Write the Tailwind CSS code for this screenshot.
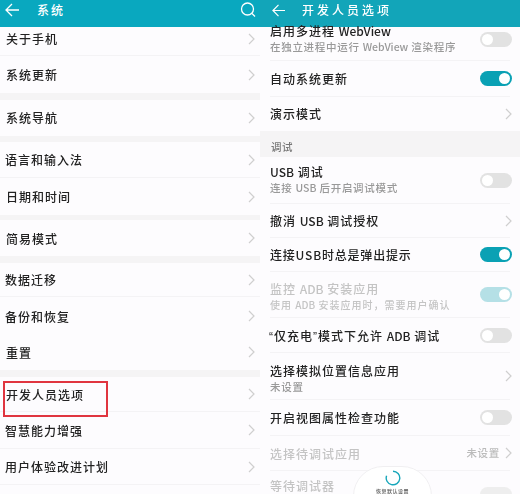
<!DOCTYPE html>
<html lang="zh-CN">
<head>
    <meta charset="UTF-8">
    <meta name="viewport" content="width=device-width, initial-scale=1.0">
    <title>开发人员选项</title>
    <script src="https://cdn.jsdelivr.net/npm/@tailwindcss/browser@4"></script>
</head>
<body class="bg-[#fdfcfe] font-['Noto_Sans_CJK_SC','Noto_Sans',sans-serif] font-medium text-[12px] tracking-[1px] text-[#222] overflow-hidden">
<div class="flex w-[520px] h-[494px] overflow-hidden blur-[0.35px]">

    <!-- 系统 -->
    <div class="w-[260px] h-[494px] shrink-0">
        <div class="h-[27px] bg-[#09a8bf] flex items-center text-white pb-[8px]">
            <svg class="ml-[5px] w-[14px] h-[14px]" viewBox="0 0 14 14" fill="none" stroke="currentColor" stroke-width="1.3"><path d="M14 7H1M7 1 1 7l6 6"/></svg>
            <span class="ml-[18px] tracking-[2px]">系统</span>
            <svg class="ml-auto mr-[4px] w-[16px] h-[16px]" viewBox="0 0 16 16" fill="none" stroke="currentColor" stroke-width="1.3"><circle cx="7.5" cy="7" r="6"/><path d="m12 11.5 3 3"/></svg>
        </div>

        <div class="h-[29px] pl-[6px] pr-[5px] flex items-center justify-between pb-[5px] border-b border-[#f4f3f5]">
            <span>关于手机</span>
            <svg class="w-[7px] h-[12px] text-[#cfcfcf]" viewBox="0 0 7 12" fill="none" stroke="currentColor" stroke-width="1.2"><path d="m1 1 5 5-5 5"/></svg>
        </div>
        <div class="h-[37px] pl-[6px] pr-[5px] flex items-center justify-between">
            <span>系统更新</span>
            <svg class="w-[7px] h-[12px] text-[#cfcfcf]" viewBox="0 0 7 12" fill="none" stroke="currentColor" stroke-width="1.2"><path d="m1 1 5 5-5 5"/></svg>
        </div>
        <div class="h-[7px] bg-[#f5f4f5]"></div>
        <div class="h-[36px] pl-[6px] pr-[5px] flex items-center justify-between">
            <span>系统导航</span>
            <svg class="w-[7px] h-[12px] text-[#cfcfcf]" viewBox="0 0 7 12" fill="none" stroke="currentColor" stroke-width="1.2"><path d="m1 1 5 5-5 5"/></svg>
        </div>
        <div class="h-[6px] bg-[#f5f4f5]"></div>
        <div class="h-[36px] pl-[5px] pr-[5px] flex items-center justify-between border-b border-[#f4f3f5]">
            <span>语言和输入法</span>
            <svg class="w-[7px] h-[12px] text-[#cfcfcf]" viewBox="0 0 7 12" fill="none" stroke="currentColor" stroke-width="1.2"><path d="m1 1 5 5-5 5"/></svg>
        </div>
        <div class="h-[37px] pl-[6px] pr-[5px] flex items-center justify-between">
            <span>日期和时间</span>
            <svg class="w-[7px] h-[12px] text-[#cfcfcf]" viewBox="0 0 7 12" fill="none" stroke="currentColor" stroke-width="1.2"><path d="m1 1 5 5-5 5"/></svg>
        </div>
        <div class="h-[5px] bg-[#f5f4f5]"></div>
        <div class="h-[36px] pl-[6px] pr-[5px] flex items-center justify-between">
            <span class="pt-[1px]">简易模式</span>
            <svg class="w-[7px] h-[12px] text-[#cfcfcf]" viewBox="0 0 7 12" fill="none" stroke="currentColor" stroke-width="1.2"><path d="m1 1 5 5-5 5"/></svg>
        </div>
        <div class="h-[7px] bg-[#f5f4f5]"></div>
        <div class="h-[34px] pl-[5px] pr-[5px] flex items-center justify-between border-b border-[#f4f3f5]">
            <span class="pt-[1px]">数据迁移</span>
            <svg class="w-[7px] h-[12px] text-[#cfcfcf]" viewBox="0 0 7 12" fill="none" stroke="currentColor" stroke-width="1.2"><path d="m1 1 5 5-5 5"/></svg>
        </div>
        <div class="h-[37px] pl-[5px] pr-[5px] flex items-center justify-between">
            <span class="pt-[3px]">备份和恢复</span>
            <svg class="w-[7px] h-[12px] text-[#cfcfcf]" viewBox="0 0 7 12" fill="none" stroke="currentColor" stroke-width="1.2"><path d="m1 1 5 5-5 5"/></svg>
        </div>
        <div class="h-[36px] pl-[6px] pr-[5px] flex items-center justify-between">
            <span class="pt-[1px]">重置</span>
            <svg class="w-[7px] h-[12px] text-[#cfcfcf]" viewBox="0 0 7 12" fill="none" stroke="currentColor" stroke-width="1.2"><path d="m1 1 5 5-5 5"/></svg>
        </div>
        <div class="h-[7px] bg-[#f5f4f5]"></div>
        <div class="relative h-[35px] pl-[6px] pr-[5px] flex items-center justify-between border-b border-[#f4f3f5]">
            <span class="pt-[1px]">开发人员选项</span>
            <svg class="w-[7px] h-[12px] text-[#cfcfcf]" viewBox="0 0 7 12" fill="none" stroke="currentColor" stroke-width="1.2"><path d="m1 1 5 5-5 5"/></svg>
            <div class="absolute left-[3px] top-[4px] w-[105px] h-[36px] border-2 border-[#e0353f]"></div>
        </div>
        <div class="h-[37px] pl-[5px] pr-[5px] flex items-center justify-between border-b border-[#f4f3f5]">
            <span class="pt-[1px]">智慧能力增强</span>
            <svg class="w-[7px] h-[12px] text-[#cfcfcf]" viewBox="0 0 7 12" fill="none" stroke="currentColor" stroke-width="1.2"><path d="m1 1 5 5-5 5"/></svg>
        </div>
        <div class="h-[36px] pl-[5px] pr-[5px] flex items-center justify-between border-b border-[#f4f3f5]">
            <span>用户体验改进计划</span>
            <svg class="w-[7px] h-[12px] text-[#cfcfcf]" viewBox="0 0 7 12" fill="none" stroke="currentColor" stroke-width="1.2"><path d="m1 1 5 5-5 5"/></svg>
        </div>
    </div>

    <!-- 开发人员选项 -->
    <div class="relative w-[260px] h-[494px] shrink-0">
        <div class="h-[27px] bg-[#12a5b9] flex items-center text-white pb-[7px]">
            <svg class="ml-[12px] w-[13px] h-[13px]" viewBox="0 0 14 14" fill="none" stroke="currentColor" stroke-width="1.3"><path d="M14 7H1M7 1 1 7l6 6"/></svg>
            <span class="ml-[17px] tracking-[3px]">开发人员选项</span>
        </div>

        <div class="mx-[10px] h-[34px] flex items-center justify-between pb-[9px] border-b border-[#f4f3f5]">
            <div class="flex flex-col leading-[16px]">
                <span>启用多进程 <span class="tracking-normal">WebView</span></span>
                <span class="text-[10.5px] tracking-[0.7px] text-[#999]">在独立进程中运行 <span class="tracking-normal">WebView</span> 渲染程序</span>
            </div>
            <div class="w-[32px] h-[15px] rounded-full bg-[#e2e2e2] flex items-center justify-start px-[2px] -mr-[2px]"><div class="w-[11px] h-[11px] rounded-full bg-white"></div></div>
        </div>
        <div class="mx-[10px] h-[36px] flex items-center justify-between border-b border-[#f4f3f5]">
            <span>自动系统更新</span>
            <div class="w-[32px] h-[15px] rounded-full bg-[#0aa1b4] flex items-center justify-end px-[2px] -mr-[2px]"><div class="w-[11px] h-[11px] rounded-full bg-white"></div></div>
        </div>
        <div class="mx-[10px] h-[34px] flex items-center justify-between">
            <span>演示模式</span>
            <svg class="w-[7px] h-[12px] text-[#cfcfcf] -mr-[2px]" viewBox="0 0 7 12" fill="none" stroke="currentColor" stroke-width="1.2"><path d="m1 1 5 5-5 5"/></svg>
        </div>
        <div class="h-[26px] bg-[#f5f4f5] pl-[11px] pt-[8px] text-[10.5px] leading-[16px] tracking-[0.5px] text-[#777]">调试</div>
        <div class="mx-[10px] h-[47px] flex items-center justify-between border-b border-[#f4f3f5]">
            <div class="flex flex-col leading-[16px]">
                <span><span class="tracking-normal">USB</span> 调试</span>
                <span class="text-[10.5px] tracking-[0.7px] text-[#999]">连接 <span class="tracking-normal">USB</span> 后开启调试模式</span>
            </div>
            <div class="w-[32px] h-[15px] rounded-full bg-[#e2e2e2] flex items-center justify-start px-[2px] -mr-[2px]"><div class="w-[11px] h-[11px] rounded-full bg-white"></div></div>
        </div>
        <div class="mx-[10px] h-[34px] flex items-center justify-between border-b border-[#f4f3f5]">
            <span>撤消 <span class="tracking-normal">USB</span> 调试授权</span>
            <svg class="w-[7px] h-[12px] text-[#cfcfcf] -mr-[2px]" viewBox="0 0 7 12" fill="none" stroke="currentColor" stroke-width="1.2"><path d="m1 1 5 5-5 5"/></svg>
        </div>
        <div class="mx-[10px] h-[34px] flex items-center justify-between border-b border-[#f4f3f5]">
            <span class="tracking-[0.8px] pt-[1px]">连接USB时总是弹出提示</span>
            <div class="w-[32px] h-[15px] rounded-full bg-[#0aa1b4] flex items-center justify-end px-[2px] -mr-[2px]"><div class="w-[11px] h-[11px] rounded-full bg-white"></div></div>
        </div>
        <div class="mx-[10px] h-[46px] flex items-center justify-between border-b border-[#f4f3f5]">
            <div class="flex flex-col leading-[16px] text-[#c4c4c4] pt-[4px]">
                <span>监控 <span class="tracking-normal">ADB</span> 安装应用</span>
                <span class="text-[10px] tracking-[1px]">使用 <span class="tracking-normal">ADB</span> 安装应用时，需要用户确认</span>
            </div>
            <div class="w-[32px] h-[15px] rounded-full bg-[#b5e0e6] flex items-center justify-end px-[2px] -mr-[2px]"><div class="w-[11px] h-[11px] rounded-full bg-white"></div></div>
        </div>
        <div class="mx-[10px] h-[35px] flex items-center justify-between border-b border-[#f4f3f5]">
            <span class="-ml-[1px] pt-[3px]"><span class="font-['Liberation_Sans']">“</span>仅充电<span class="font-['Liberation_Sans']">”</span>模式下允许 <span class="tracking-normal">ADB</span> 调试</span>
            <div class="w-[32px] h-[15px] rounded-full bg-[#e2e2e2] flex items-center justify-start px-[2px] -mr-[2px]"><div class="w-[11px] h-[11px] rounded-full bg-white"></div></div>
        </div>
        <div class="mx-[10px] h-[47px] flex items-center justify-between border-b border-[#f4f3f5]">
            <div class="flex flex-col leading-[16px] pt-[5px]">
                <span>选择模拟位置信息应用</span>
                <span class="text-[10.5px] tracking-[0.7px] text-[#999]">未设置</span>
            </div>
            <svg class="w-[7px] h-[12px] text-[#cfcfcf] -mr-[2px]" viewBox="0 0 7 12" fill="none" stroke="currentColor" stroke-width="1.2"><path d="m1 1 5 5-5 5"/></svg>
        </div>
        <div class="mx-[10px] h-[36px] flex items-center justify-between border-b border-[#f4f3f5]">
            <span class="pt-[1px]">开启视图属性检查功能</span>
            <div class="w-[32px] h-[15px] rounded-full bg-[#e2e2e2] flex items-center justify-start px-[2px] -mr-[2px]"><div class="w-[11px] h-[11px] rounded-full bg-white"></div></div>
        </div>
        <div class="mx-[10px] h-[35px] flex items-center justify-between border-b border-[#f4f3f5] text-[#c4c4c4]">
            <span class="pt-[1px]">选择待调试应用</span>
            <span class="flex items-center gap-[5px] text-[10.5px] tracking-[0.7px] text-[#bbb]">未设置
                <svg class="w-[7px] h-[12px] text-[#cfcfcf] -mr-[2px]" viewBox="0 0 7 12" fill="none" stroke="currentColor" stroke-width="1.2"><path d="m1 1 5 5-5 5"/></svg>
            </span>
        </div>
        <div class="mx-[10px] h-[35px] flex items-start justify-between pt-[6px] text-[#c4c4c4]">
            <span>等待调试器</span>
            <div class="w-[32px] h-[15px] rounded-full bg-[#eeeeee] mt-[10px] -mr-[2px]"></div>
        </div>

        <!-- 恢复默认设置 浮层 -->
        <div class="absolute left-[93px] top-[466px] w-[79px] h-[40px] rounded-t-[30px] bg-white border border-[#f0eff1] flex flex-col items-center pt-[3px]">
            <svg class="w-[16px] h-[16px] text-[#17a6ba]" viewBox="0 0 16 16" fill="none" stroke="currentColor" stroke-width="1.4"><path d="M8 1.2a6.8 6.8 0 1 1-6.4 4.5"/></svg>
            <span class="text-[5px] leading-[8px] tracking-[0.5px] text-[#555] mt-[1px]">恢复默认设置</span>
        </div>
    </div>
</div>
</body>
</html>
